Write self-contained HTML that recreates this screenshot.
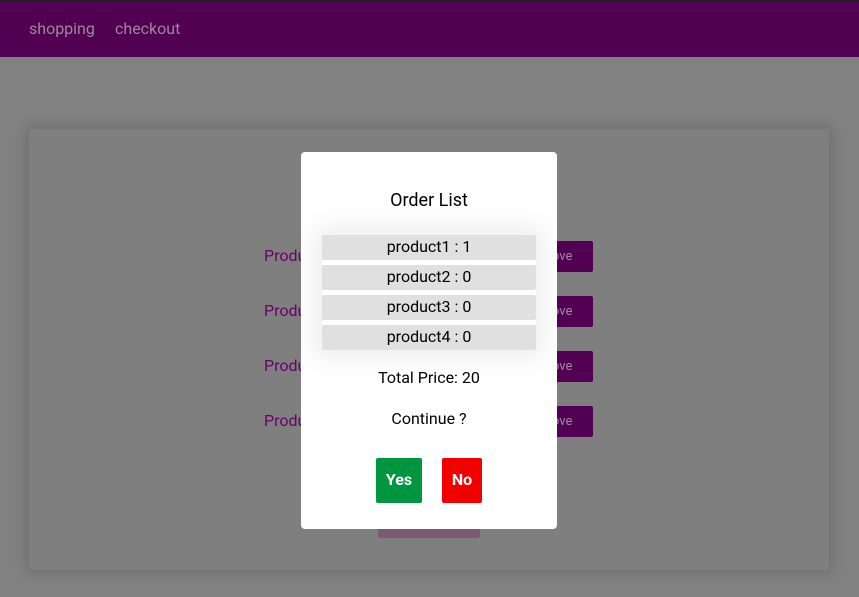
<!DOCTYPE html>
<html><head><style>
*{margin:0;padding:0;box-sizing:border-box}
body{width:859px;height:597px;background:#818181;font-family:Roboto,"Liberation Sans",sans-serif;position:relative;overflow:hidden}
.top{position:absolute;left:0;top:0;width:859px;height:2px;background:#222}
.nav{position:absolute;left:0;top:2px;width:859px;height:55px;background:#520052}
.nav span{position:absolute;top:17px;color:#9a8a9a;font-size:16px}
.card{position:absolute;left:29px;top:129px;width:800px;height:441px;background:#7f7f7f;border-radius:4px;box-shadow:0 0 12px 4px rgba(0,0,0,.12)}
.prod{position:absolute;left:264px;color:#6b006b;font-size:16px}
.rm{position:absolute;left:505px;width:88px;height:31px;background:#520052;border-radius:2px;color:#a08aa0;font-size:13px;line-height:31px;text-align:center}
.bot{position:absolute;left:378px;top:520px;width:102px;height:18px;background:#7a5a72;border-radius:2px}
.modal{position:absolute;left:301px;top:152px;width:256px;height:377px;background:#fff;border-radius:4px;text-align:center}
.title{position:absolute;top:38px;width:100%;font-size:18px;color:#000}
.list{position:absolute;left:21px;top:83px;width:214px;box-shadow:0 0 24px 8px rgba(0,0,0,.07)}
.item{height:25px;margin-bottom:5px;background:#e0e0e0;border-radius:2px;font-size:16px;line-height:24px;color:#000}
.item:last-child{margin-bottom:0}
.t{position:absolute;width:100%;font-size:16px;color:#000}
.btn{position:absolute;top:306px;height:45px;color:#fff;font-size:16px;font-weight:bold;line-height:43px;border-radius:2px}
</style></head><body>
<div class="top"></div>
<div class="nav"><span style="left:29px">shopping</span><span style="left:115px">checkout</span></div>
<div class="card"></div>
<div class="prod" style="top:246px">Product1</div>
<div class="prod" style="top:301px">Product2</div>
<div class="prod" style="top:356px">Product3</div>
<div class="prod" style="top:411px">Product4</div>
<div class="rm" style="top:241px">Remove</div>
<div class="rm" style="top:296px">Remove</div>
<div class="rm" style="top:351px">Remove</div>
<div class="rm" style="top:406px">Remove</div>
<div class="bot"></div>
<div class="modal">
<div class="title">Order List</div>
<div class="list">
<div class="item">product1 : 1</div>
<div class="item">product2 : 0</div>
<div class="item">product3 : 0</div>
<div class="item">product4 : 0</div>
</div>
<div class="t" style="top:216px">Total Price: 20</div>
<div class="t" style="top:257px">Continue ?</div>
<div class="btn" style="left:75px;width:46px;background:#009640">Yes</div>
<div class="btn" style="left:141px;width:40px;background:#f20000">No</div>
</div>
</body></html>
